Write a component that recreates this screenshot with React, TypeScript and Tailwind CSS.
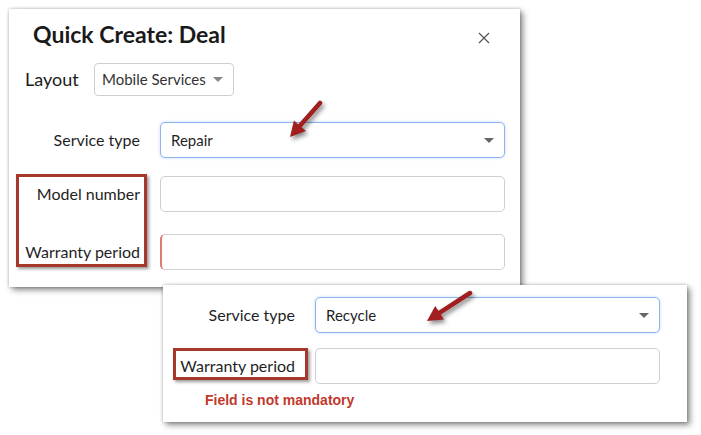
import React from "react";

const LATO = "font-[family-name:Lato,'Noto_Sans',sans-serif]";

function Caret({ color = "border-t-[#666]" }: { color?: string }) {
  return <span className={`h-0 w-0 border-x-[5px] border-t-[5px] border-x-transparent ${color}`} />;
}

function SelectBox({ value }: { value: string }) {
  return (
    <div className="flex h-[36px] w-[345px] items-center justify-between rounded-[5px] border border-[#8db4ee] bg-white pl-[10px] pr-[10px] text-[15px] text-[#1f1f1f] shadow-[0_0_3px_rgba(77,144,254,0.35)]">
      <span>{value}</span>
      <Caret />
    </div>
  );
}

function TextInput({ required }: { required?: boolean }) {
  return (
    <div
      className={`h-[36px] w-[345px] rounded-[5px] border border-[#cfcfcf] bg-white ${
        required ? "border-l-[2px] border-l-[#de7b72]" : ""
      }`}
    />
  );
}

function Row({ label, children, className = "" }: { label: string; children: React.ReactNode; className?: string }) {
  return (
    <div className={`flex items-center gap-[20px] ${className}`}>
      <div className="w-[131px] text-right text-[16px] text-[#1f1f1f]">{label}</div>
      {children}
    </div>
  );
}

// arrow drawn from tail to tip, head computed from direction
function Arrow({ tail, tip }: { tail: [number, number]; tip: [number, number] }) {
  const dx = tip[0] - tail[0];
  const dy = tip[1] - tail[1];
  const len = Math.hypot(dx, dy);
  const ux = dx / len;
  const uy = dy / len;
  const nx = -uy;
  const ny = ux;
  const bx = tip[0] - 15 * ux;
  const by = tip[1] - 15 * uy;
  const pts = `${tip[0]},${tip[1]} ${bx + 8 * nx},${by + 8 * ny} ${bx - 8 * nx},${by - 8 * ny}`;
  return (
    <g>
      <line x1={tail[0]} y1={tail[1]} x2={bx + 2 * ux} y2={by + 2 * uy} stroke="#a11f1f" strokeWidth={4.5} strokeLinecap="round" />
      <polygon points={pts} fill="#a11f1f" />
    </g>
  );
}

export default function App() {
  return (
    <div className={`relative h-[435px] w-[701px] overflow-hidden bg-white ${LATO}`}>
      {/* main dialog */}
      <div className="absolute left-[9px] top-[9px] h-[278px] w-[511px] bg-white shadow-[3px_3px_6px_rgba(0,0,0,0.45),0_0_3px_rgba(0,0,0,0.25)]">
        <div className="flex items-start justify-between pl-[24px] pr-[30px] pt-[11px]">
          <h1 className="text-[23px] font-bold leading-[28px] text-[#1a1a1a]">Quick Create: Deal</h1>
          <svg className="mt-[12px]" width="12" height="12" viewBox="0 0 12 12">
            <path d="M1 1L11 11M11 1L1 11" stroke="#555" strokeWidth="1.2" />
          </svg>
        </div>

        <div className="mt-[15px] flex items-center pl-[16px]">
          <div className="w-[69px] text-[18px] text-[#1a1a1a]">Layout</div>
          <div className="flex h-[33px] w-[140px] items-center justify-between rounded-[4px] border border-[#cfcfcf] bg-white pl-[7px] pr-[10px] text-[15px] text-[#333]">
            <span>Mobile Services</span>
            <Caret color="border-t-[#888]" />
          </div>
        </div>

        <Row label="Service type" className="mt-[26px]">
          <SelectBox value="Repair" />
        </Row>
        <Row label="Model number" className="mt-[18px]">
          <TextInput />
        </Row>
        <Row label="Warranty period" className="mt-[22px]">
          <TextInput required />
        </Row>

        {/* annotation box */}
        <div className="absolute left-[7px] top-[165px] h-[93px] w-[131px] border-[3px] border-[#a5372b] shadow-[2px_2px_3px_rgba(0,0,0,0.4)]" />
      </div>

      {/* second snippet */}
      <div className="absolute left-[163px] top-[285px] h-[137px] w-[524px] bg-white shadow-[3px_3px_6px_rgba(0,0,0,0.45),0_0_3px_rgba(0,0,0,0.25)]">
        <div className="flex items-center gap-[20px] pt-[12px]">
          <div className="w-[132px] text-right text-[16px] text-[#1f1f1f]">Service type</div>
          <SelectBox value="Recycle" />
        </div>
        <div className="mt-[15px] flex items-center gap-[20px]">
          <div className="w-[132px] text-right text-[16px] text-[#1f1f1f]">Warranty period</div>
          <TextInput />
        </div>
        <p className="mt-[8px] pl-[42px] font-[family-name:'Liberation_Sans',Arial,sans-serif] text-[14px] font-bold leading-[16px] text-[#c0392b]">
          Field is not mandatory
        </p>

        <div className="absolute left-[10px] top-[63px] h-[32px] w-[135px] border-[3px] border-[#a5372b] shadow-[2px_2px_3px_rgba(0,0,0,0.4)]" />
      </div>

      {/* arrows */}
      <svg className="pointer-events-none absolute inset-0 drop-shadow-[2px_3px_2px_rgba(0,0,0,0.45)]" width="701" height="435">
        <Arrow tail={[320, 103]} tip={[290, 137]} />
        <Arrow tail={[470, 293]} tip={[427, 321]} />
      </svg>
    </div>
  );
}
